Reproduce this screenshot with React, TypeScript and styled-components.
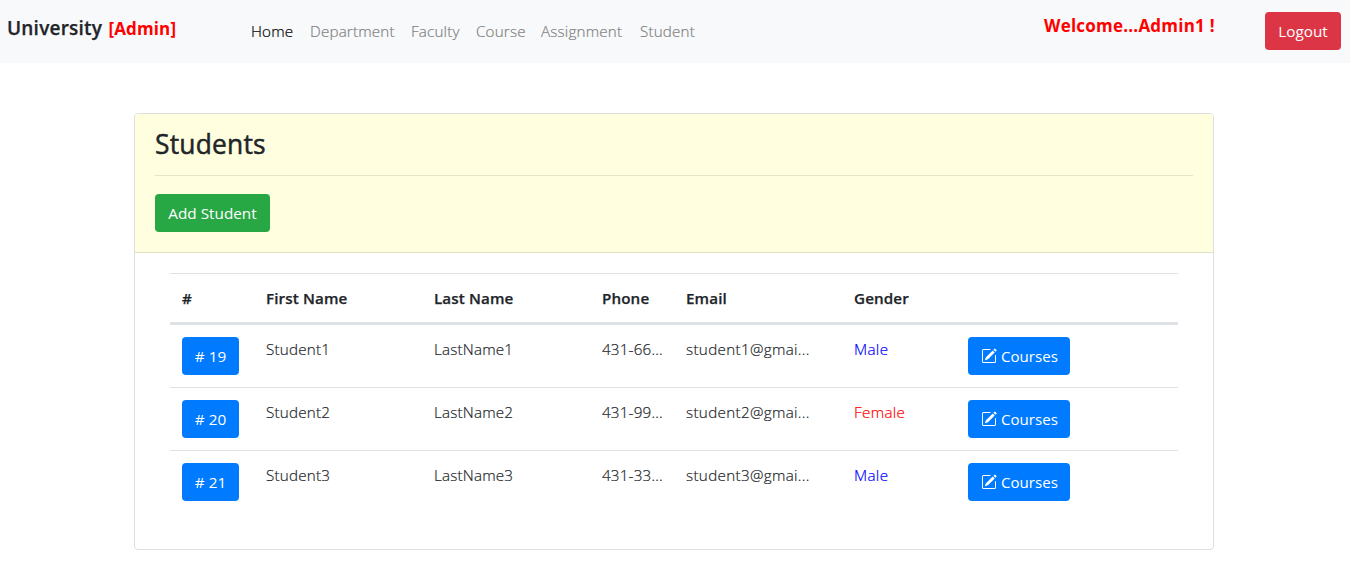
import React from 'react';
import styled, { createGlobalStyle } from 'styled-components';

const GlobalStyle = createGlobalStyle`
  *, *::before, *::after { box-sizing: border-box; }
  body {
    margin: 0;
    background: #fff;
    color: #212529;
    font-family: 'Segoe UI', 'Open Sans', 'Noto Sans', sans-serif;
    font-size: 15.2px;
    line-height: 24px;
  }
`;

const Navbar = styled.nav`
  display: flex;
  align-items: flex-start;
  height: 63px;
  padding: 12px 9px 0 7px;
  background: #f8f9fa;
`;

const Brand = styled.div`
  width: 236px;
  padding-top: 1px;
  font-size: 19px;
  line-height: 30px;
  font-weight: 600;
  letter-spacing: 0.22px;
  -webkit-text-stroke: 0.25px currentColor;
  white-space: nowrap;
`;

const BrandRole = styled.span`
  color: red;
  font-size: 17px;
  font-weight: 700;
  letter-spacing: 0.15px;
  -webkit-text-stroke: 0;
  margin-left: 1px;
`;

const NavList = styled.ul`
  display: flex;
  flex: 1;
  margin: 0;
  padding: 0;
  list-style: none;
`;

const NavItem = styled.li<{ $width: number; $active?: boolean }>`
  width: ${p => p.$width + 16}px;
  padding: 7px 8px;
  font-weight: 300;
  letter-spacing: 0.18px;
  -webkit-text-stroke: 0.2px currentColor;
  white-space: nowrap;
  color: ${p => (p.$active ? '#000' : '#808182')};
`;

const Welcome = styled.div`
  width: 221px;
  padding-top: 2px;
  color: red;
  font-size: 17px;
  font-weight: 700;
  letter-spacing: 0.22px;
  white-space: nowrap;
`;

const Button = styled.button<{ $color: string; $width: number }>`
  display: inline-flex;
  align-items: center;
  justify-content: center;
  gap: 4px;
  width: ${p => p.$width}px;
  height: 38px;
  padding: 0;
  border: 0;
  border-radius: 4px;
  background: ${p => p.$color};
  color: #fff;
  font: inherit;
  font-size: 15.3px;
  font-weight: 400;
  white-space: nowrap;
`;

const Card = styled.main`
  width: 1080px;
  margin: 50px 0 0 134px;
  border: 1px solid #dfdfdf;
  border-radius: 4px;
`;

const CardHeader = styled.header`
  height: 139px;
  padding: 14px 20px 12px;
  border-bottom: 1px solid #dfdfc4;
  border-radius: 3px 3px 0 0;
  background: #ffffe0;
`;

const Title = styled.h3`
  margin: 0 0 14px;
  font-size: 26.4px;
  line-height: 33px;
  font-weight: 400;
  letter-spacing: 0.2px;
  -webkit-text-stroke: 0.5px currentColor;
`;

const Rule = styled.hr`
  margin: 0 0 18px;
  border: 0;
  border-top: 1px solid rgba(0, 0, 0, .1);
`;

const CardBody = styled.section`
  padding: 20px 35px 36px;
`;

const Row = styled.div<{ $head?: boolean }>`
  display: grid;
  grid-template-columns: 84px 168px 168px 84px 168px 114px 1fr;
  height: ${p => (p.$head ? 52 : 63)}px;
  padding-top: 12px;
  border-top: 1px solid #dee2e6;
  ${p => p.$head && 'border-bottom: 3px solid #dee2e6; font-weight: 600; -webkit-text-stroke: 0.25px currentColor;'}
`;

const FirstRow = styled(Row)`
  && { height: 62px; border-top: 0; }
`;

const Cell = styled.div<{ $color?: string; $light?: boolean; $spacing?: number }>`
  padding-left: 12px;
  white-space: nowrap;
  color: ${p => p.$color ?? 'inherit'};
  font-weight: ${p => (p.$light ? 300 : 'inherit')};
  letter-spacing: ${p => p.$spacing ?? (p.$light ? 0.2 : 0.12)}px;
  ${p => p.$light && '-webkit-text-stroke: 0.2px currentColor;'}
`;

const EditIcon = () => (
  <svg width="16" height="16" viewBox="0 0 16 16" fill="currentColor" aria-hidden="true">
    <path d="M15.502 1.94a.5.5 0 0 1 0 .706L14.459 3.69l-2-2L13.502.646a.5.5 0 0 1 .707 0l1.293 1.293zm-1.75 2.456-2-2L4.939 9.21a.5.5 0 0 0-.121.196l-.805 2.414a.25.25 0 0 0 .316.316l2.414-.805a.5.5 0 0 0 .196-.12l6.813-6.814z" />
    <path fillRule="evenodd" d="M1 13.5A1.5 1.5 0 0 0 2.5 15h11a1.5 1.5 0 0 0 1.5-1.5v-6a.5.5 0 0 0-1 0v6a.5.5 0 0 1-.5.5h-11a.5.5 0 0 1-.5-.5v-11a.5.5 0 0 1 .5-.5H9a.5.5 0 0 0 0-1H2.5A1.5 1.5 0 0 0 1 2.5v11z" />
  </svg>
);

const CoursesButton = styled(Button)`
  justify-content: flex-start;
  padding-left: 13px;
  font-size: 15.1px;
  letter-spacing: 0;
`;

const links = [
  { label: 'Home', width: 43 },
  { label: 'Department', width: 85 },
  { label: 'Faculty', width: 49 },
  { label: 'Course', width: 49 },
  { label: 'Assignment', width: 83 },
  { label: 'Student', width: 55 },
];

const headings = ['#', 'First Name', 'Last Name', 'Phone', 'Email', 'Gender'];

const students = [
  { id: 19, first: 'Student1', last: 'LastName1', phone: '431-66...', email: 'student1@gmai...', gender: 'Male' },
  { id: 20, first: 'Student2', last: 'LastName2', phone: '431-99...', email: 'student2@gmai...', gender: 'Female' },
  { id: 21, first: 'Student3', last: 'LastName3', phone: '431-33...', email: 'student3@gmai...', gender: 'Male' },
];

export default function App() {
  return (
    <>
      <GlobalStyle />
      <Navbar>
        <Brand>University <BrandRole>[Admin]</BrandRole></Brand>
        <NavList>
          {links.map((link, i) => (
            <NavItem key={link.label} $width={link.width} $active={i === 0}>{link.label}</NavItem>
          ))}
        </NavList>
        <Welcome>Welcome...Admin1 !</Welcome>
        <Button $color="#dc3545" $width={76}>Logout</Button>
      </Navbar>
      <Card>
        <CardHeader>
          <Title>Students</Title>
          <Rule />
          <Button $color="#28a745" $width={115}>Add Student</Button>
        </CardHeader>
        <CardBody>
          <Row $head>
            {headings.map(h => <Cell key={h}>{h}</Cell>)}
          </Row>
          {students.map((s, i) => {
            const Line = i === 0 ? FirstRow : Row;
            return (
              <Line key={s.id}>
                <Cell><Button $color="#007bff" $width={57}># {s.id}</Button></Cell>
                <Cell $light>{s.first}</Cell>
                <Cell $light>{s.last}</Cell>
                <Cell $light>{s.phone}</Cell>
                <Cell $light $spacing={0.34}>{s.email}</Cell>
                <Cell $light $spacing={0.35} $color={s.gender === 'Male' ? 'blue' : 'red'}>{s.gender}</Cell>
                <Cell><CoursesButton $color="#007bff" $width={102}><EditIcon />Courses</CoursesButton></Cell>
              </Line>
            );
          })}
        </CardBody>
      </Card>
    </>
  );
}
